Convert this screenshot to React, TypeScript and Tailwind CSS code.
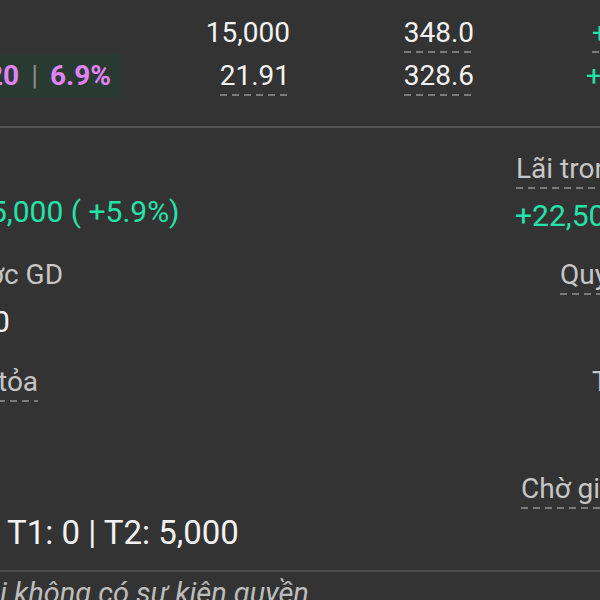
import React from "react";

function Dashed({ children, className = "" }: { children: React.ReactNode; className?: string }) {
  return (
    <span className={`inline-flex flex-col ${className}`}>
      <span className="leading-none">{children}</span>
      <span className="mt-[4px] h-[2px] bg-[linear-gradient(to_right,#7a7a7a_7px,transparent_7px)] bg-[length:12px_2px]" />
    </span>
  );
}

export default function App() {
  return (
    <div className="h-[600px] w-[600px] overflow-hidden whitespace-nowrap bg-[#333333] font-[family-name:Roboto,sans-serif] text-[#f2f2f2]">
      {/* quote table */}
      <div className="pt-[11px] text-[28px] leading-[43px]">
        <div className="flex h-[43px]">
          <div className="w-[120px] shrink-0" />
          <div className="w-[170px] shrink-0 text-right">15,000</div>
          <div className="w-[184px] shrink-0 text-right">
            <Dashed>348.0</Dashed>
          </div>
          <div className="shrink-0 pl-[118px] text-[#24e3a8]">
            <Dashed>+3.5</Dashed>
          </div>
        </div>
        <div className="flex h-[43px]">
          <div className="w-[120px] shrink-0 bg-[#283a32] font-bold text-[#e283f5]">
            <span className="ml-[-13px]">20</span>
            <span className="mx-[12px] font-normal text-[#8c8c8c]">|</span>
            <span>6.9%</span>
          </div>
          <div className="w-[170px] shrink-0 text-right">
            <Dashed>21.91</Dashed>
          </div>
          <div className="w-[184px] shrink-0 text-right">
            <Dashed>328.6</Dashed>
          </div>
          <div className="shrink-0 pl-[112px] text-[#24e3a8]">+19.5</div>
        </div>
      </div>

      <div className="mt-[29px] h-[2px] bg-[#535353]" />

      {/* position details */}
      <div className="text-[28px] leading-none">
        <div className="flex pt-[27px]">
          <div className="w-[516px] shrink-0" />
          <Dashed className="text-[#c6c6c6]">Lãi trong ngày</Dashed>
        </div>

        <div className="mt-[8px] flex items-start text-[30px] text-[#24e3a8]">
          <div className="w-[515px] shrink-0">
            <div className="ml-[-10px]">5,000 ( +5.9%)</div>
          </div>
          <div className="mt-[4px]">+22,500</div>
        </div>

        <div className="mt-[30px] flex items-start text-[#c6c6c6]">
          <div className="w-[560px] shrink-0">
            <div className="ml-[-12px]">ợc GD</div>
          </div>
          <Dashed>Quyền</Dashed>
        </div>

        <div className="mt-[12px] text-[30px]">
          <div className="ml-[-7px]">0</div>
        </div>

        <div className="mt-[31px] flex items-start text-[#c6c6c6]">
          <div className="w-[592px] shrink-0">
            <Dashed className="ml-[-2px]">tỏa</Dashed>
          </div>
          <div>Tổng</div>
        </div>

        <div className="mt-[73px] flex">
          <div className="w-[521px] shrink-0" />
          <Dashed className="text-[#c6c6c6]">Chờ giao</Dashed>
        </div>

        <div className="mt-[7px] pl-[7px] text-[33px]">T1: 0 | T2: 5,000</div>
      </div>

      <div className="mt-[21px] h-[2px] bg-[#4c4c4c]" />

      <div className="mt-[7px] text-[29px] leading-none italic text-[#bdbdbd]">i không có sự kiện quyền</div>
    </div>
  );
}
